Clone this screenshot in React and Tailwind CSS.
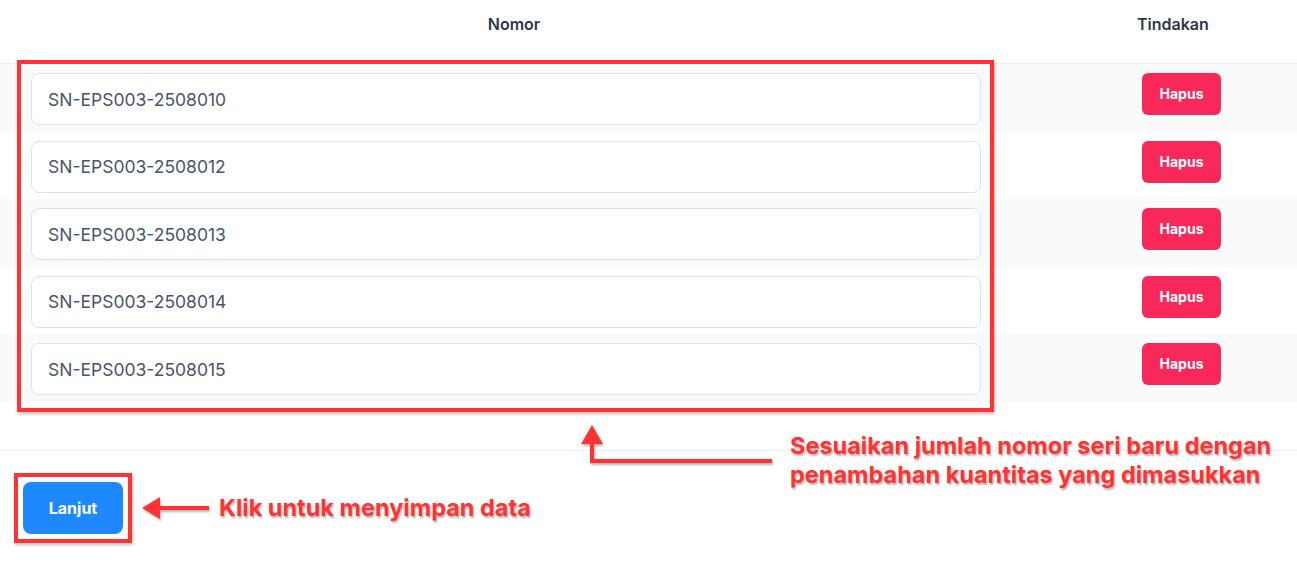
import React from 'react';

const nomorList = [
  'SN-EPS003-2508010',
  'SN-EPS003-2508012',
  'SN-EPS003-2508013',
  'SN-EPS003-2508014',
  'SN-EPS003-2508015',
];

export default function App() {
  return (
    <div className="relative w-[1297px] h-[565px] bg-white overflow-hidden font-['Inter',sans-serif]">
      {/* tabel nomor seri */}
      <div className="grid grid-cols-[1028px_1fr] h-16 border-b border-[#eef0f3] text-[16px] font-semibold text-[#2d3748]">
        <div className="pt-[12px] text-center">Nomor</div>
        <div className="pt-[12px] pl-[109px]">Tindakan</div>
      </div>
      {nomorList.map((n, i) => (
        <div
          key={n}
          className={
            i % 2 === 0
              ? 'grid grid-cols-[1028px_1fr] h-[67.5px] pt-[9px] bg-[#fafafa]'
              : 'grid grid-cols-[1028px_1fr] h-[67.5px] pt-[9px] bg-white'
          }
        >
          <div className="pl-[31px]">
            <input
              readOnly
              value={n}
              className="w-[950px] h-[52px] rounded-lg border border-[#dfe2ee] bg-white px-4 text-[17.5px] text-[#4a5568] outline-none"
            />
          </div>
          <div className="pl-[114px]">
            <button className="w-[79px] h-[42px] rounded-md bg-[#f9285a] text-sm font-bold text-white">
              Hapus
            </button>
          </div>
        </div>
      ))}

      <div className="h-[48px]" />

      {/* footer */}
      <div className="border-t border-[#eef0f3] pt-[22px] pl-[14px] flex items-center">
        <div className="border-4 border-[#ff3333] p-[5px] shadow-[1px_2px_3px_rgba(0,0,0,0.25)]">
          <button className="w-[100px] h-[52px] rounded-lg bg-[#1e88ff] text-base font-bold text-white">
            Lanjut
          </button>
        </div>
        <svg width="67" height="26" viewBox="0 0 67 26" className="ml-[10px] drop-shadow-[1px_2px_1px_rgba(0,0,0,0.3)]">
          <polygon points="0,13 18,2 18,24" fill="#ff3333" />
          <rect x="16" y="11" width="51" height="4" fill="#ff3333" />
        </svg>
        <span className="ml-[10px] text-[23.5px] font-bold text-[#ff3333] [text-shadow:1px_2px_2px_rgba(0,0,0,0.3)]">
          Klik untuk menyimpan data
        </span>
      </div>

      {/* anotasi */}
      <div className="absolute left-[17px] top-[60px] w-[977px] h-[352px] border-4 border-[#ff3333] shadow-[1px_2px_3px_rgba(0,0,0,0.25)] pointer-events-none" />
      <svg
        width="200"
        height="48"
        viewBox="0 0 200 48"
        className="absolute left-[578px] top-[422px] drop-shadow-[1px_2px_1px_rgba(0,0,0,0.3)]"
      >
        <polygon points="14,3 3,22 25,22" fill="#ff3333" />
        <rect x="12" y="20" width="4" height="21" fill="#ff3333" />
        <rect x="12" y="37" width="182" height="4" fill="#ff3333" />
      </svg>
      <div className="absolute left-[790px] top-[431px] text-[23.5px] leading-[29px] font-bold text-[#ff3333] [text-shadow:1px_2px_2px_rgba(0,0,0,0.3)]">
        Sesuaikan jumlah nomor seri baru dengan
        <br />
        penambahan kuantitas yang dimasukkan
      </div>
    </div>
  );
}
